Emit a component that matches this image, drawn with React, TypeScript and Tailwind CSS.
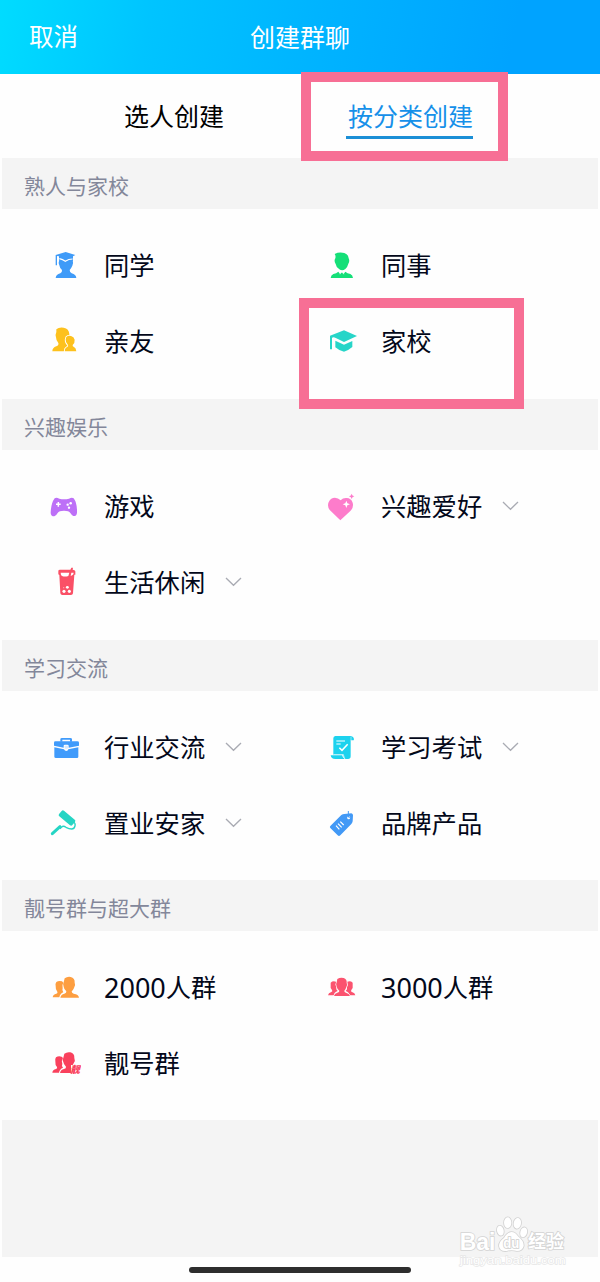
import type { ReactNode } from "react";

function Icon({ box, color, children }: { box: string; color: string; children: ReactNode }) {
  return (
    <svg width="32" height="32" viewBox={box} fill={color} className="shrink-0">
      {children}
    </svg>
  );
}

function Chevron() {
  return (
    <svg width="17" height="10" viewBox="0 0 17 10" fill="none" stroke="#a9abb3" strokeWidth="1.3" className="-mt-[2px] ml-[20px]">
      <path d="M1 1 L8.5 8.3 L16 1" />
    </svg>
  );
}

const classmate = (
  <Icon box="27 30 96 96" color="#3f9bf8">
    <path d="M47 45 L77 36 L106 45 L99 49 L99 62 L77 69 L57 61 L57 49 L51 48 L51 76 L47 76Z" />
    <path d="M58 59 Q68 60 76 67 Q86 59 98 60 Q101 70 97 77 Q93 86 89 90 Q89 97 95 100 Q108 103 109 114 H47 Q48 103 61 100 Q67 97 66 90 Q59 84 58 76 Q54 69 58 59Z" />
    <path d="M58 56 Q68 58 76 64 Q86 57 98 57" fill="none" stroke="#fff" strokeWidth="3.5" />
  </Icon>
);

const friends = (
  <Icon box="27 258 96 96" color="#fdc11d">
    <path d="M49 268 Q58 260 71 263 Q87 266 88 282 L84 334 H37 Q37 323 49 319 Q57 316 55 309 Q48 302 48 292 Q45 285 49 276Z" />
    <path d="M79 291 Q84 286 93 288 Q102 290 104 299 Q105 309 98 315 Q97 320 102 321 Q108 324 109 334 H74 Q74 325 80 322 Q87 319 84 315 Q76 308 77 298Z" stroke="#fff" strokeWidth="5" paintOrder="stroke" />
  </Icon>
);

const colleague = (
  <Icon box="108 30 96 96" color="#15df78">
    <path d="M134 42 Q147 35 163 39 Q175 43 176 55 Q180 63 175 71 Q173 80 166 87 Q157 94 148 88 Q138 81 137 72 Q131 63 136 55 Q138 48 134 42Z" />
    <path d="M145 95 Q139 100 130 102 Q123 105 122 114 H189 Q188 105 181 102 Q172 100 166 95 L161 102 L158 98 L153 98 L150 102Z" />
    <path d="M153 98 L150 103 M158 98 L161 103" stroke="#fff" strokeWidth="1.5" />
  </Icon>
);

const school = (
  <Icon box="108 258 96 96" color="#27d5c8">
    <path d="M120 287 L162 271 L201 288 L162 306 L139 295 Q129 289 126 294 V328 H120Z" />
    <path d="M136 302 L162 314 L187 303 V321 Q177 330 162 335 Q147 332 136 322Z" />
  </Icon>
);

const game = (
  <Icon box="27 33 96 96" color="#bd70f7">
    <path d="M44 55 Q49 51 58 56 Q72 60 87 56 Q96 51 101 55 Q112 70 111 98 Q110 109 100 108 Q96 107 91 99 Q87 92 72 92 Q57 92 53 99 Q48 108 43 109 Q32 109 32 98 Q33 70 44 55Z" />
    <path d="M55 66 V80 M48 73 H62" stroke="#fff" strokeWidth="4.5" />
    <circle cx="92" cy="70" r="3.8" fill="#fff" />
    <circle cx="83" cy="74" r="3.5" fill="#fff" />
    <circle cx="87" cy="83" r="3.5" fill="#fff" />
  </Icon>
);

const drink = (
  <Icon box="27 261 96 96" color="#fa5066">
    <path d="M55 273 Q55 269 60 269 H91 L94 263 H99 L98 269 Q105 270 106 274 V284 H103 L99 340 Q98 345 93 345 H67 Q62 345 61 340 L58 285 L55 283Z" />
    <path d="M62 278 H88 L85 288 Q75 291 66 288 Q62 286 62 278Z M94 278 H101 L100 283 Q97 287 92 288Z" fill="#fff" />
    <circle cx="82" cy="322" r="4.3" fill="#fff" />
    <circle cx="72" cy="334" r="4.7" fill="#fff" />
    <circle cx="88" cy="334" r="4.7" fill="#fff" />
    <circle cx="71" cy="323" r="2" fill="#fff" opacity=".5" />
  </Icon>
);

const hobby = (
  <Icon box="48 33 96 96" color="#fd7ccb">
    <path d="M92 61 Q82 51 69 54 Q55 59 54 76 Q54 86 63 94 L91 121 L121 93 Q132 82 128 68 Q123 54 110 54 Q99 53 92 61Z" />
    <path d="M109 62 L112 70 L120 73 L112 76 L109 84 L106 76 L98 73 L106 70Z" fill="#fff" />
    <path d="M125 41 L127.5 46.5 L133 49 L127.5 51.5 L125 57 L122.5 51.5 L117 49 L122.5 46.5Z" />
  </Icon>
);

const business = (
  <Icon box="27 36 96 96" color="#409bfb">
    <path d="M61 65 V58 Q61 54 66 54 H91 Q96 54 96 58 V65 H90 V59 H67 V65Z" />
    <path d="M46 64 H112 Q117 64 117 68 V77 L86 83 V77 Q86 74 82 74 H75 Q71 74 71 77 V83 L42 77 V68 Q42 64 46 64Z" />
    <path d="M43 82 L72 88 Q74 93 79 93 Q84 93 85 88 L115 82 V110 Q115 114 111 114 H48 Q43 114 43 110Z" />
    <rect x="74" y="77" width="10" height="9" rx="2" fill="#d5e9ff" />
  </Icon>
);

const roller = (
  <Icon box="27 264 96 96" color="#25d5c4">
    <rect x="-26" y="-11" width="52" height="22" rx="5" transform="translate(81 294) rotate(40)" />
    <path d="M101 306 Q107 310 105 318 Q103 327 95 327 Q87 327 78 322 Q70 316 65 321 L60 326" fill="none" stroke="#25d5c4" strokeWidth="4" />
    <path d="M37 341 L60 320" stroke="#25d5c4" strokeWidth="9" strokeLinecap="round" />
  </Icon>
);

const exam = (
  <Icon box="48 36 96 96" color="#1dd2ee">
    <path d="M76 48 H123 Q131 49 132 57 L131 61 H122 V109 Q122 117 114 117 H104 Q101 109 98 105 H70 V55 Q70 49 76 48Z" />
    <path d="M62 106 H96 Q98 113 104 117 H76 Q63 117 62 106Z" />
    <path d="M70 103.5 H100 Q102 112 105 118" stroke="#fff" strokeWidth="2" fill="none" />
    <path d="M79 63 H105 M79 72 H92" stroke="#fff" strokeWidth="3.5" />
    <path d="M88 83 L96 91 L113 73" stroke="#fff" strokeWidth="4.5" fill="none" />
    <path d="M123 50 V62" stroke="#fff" strokeWidth="1.5" />
  </Icon>
);

const tag = (
  <Icon box="48 264 96 96" color="#4299f6">
    <path d="M61 318 L94 285 Q98 282 103 282 L124 280 Q129 281 129 286 L128 304 Q127 309 124 312 L91 346 Q87 350 83 346 L61 324 Q58 321 61 318Z" />
    <circle cx="116" cy="293" r="4.5" fill="#fff" />
    <path d="M115 273 V288 Q115 293 119 293" stroke="#4299f6" strokeWidth="3" fill="none" />
    <path d="M78 317 L88 328 M84 311 L95 322 M91 305 L101 315" stroke="#fff" strokeWidth="3.5" />
  </Icon>
);

const backHead = "M49 66 Q56 61 66 64 L70 68 Q65 75 68 85 Q65 92 70 97 Q60 101 58 112 H38 Q39 103 49 101 Q54 99 52 95 Q46 89 47 78 Q45 72 49 66Z";
const frontHead = "M74 55 Q82 49 92 51 Q105 54 104 68 Q108 76 102 84 Q99 91 95 94 Q95 99 101 101 Q116 103 117 113 H61 Q63 103 73 101 Q80 99 79 94 Q72 88 71 80 Q67 73 71 67Z";

const group2000 = (
  <Icon box="27 36 96 96" color="#fd9e40">
    <path d={backHead} />
    <path d={frontHead} />
  </Icon>
);

const group3000 = (
  <Icon box="48 36 96 96" color="#fb536f">
    <path d="M62 68 Q68 62 78 65 Q76 75 79 82 Q77 88 83 93 Q72 97 71 106 H54 Q55 98 64 96 Q69 94 66 90 Q60 84 62 77Z" />
    <path d="M128 68 Q122 62 112 65 Q114 75 111 82 Q113 88 107 93 Q118 97 119 106 H136 Q135 98 126 96 Q121 94 124 90 Q130 84 128 77Z" />
    <path d="M82 57 Q91 51 101 54 Q111 57 110 68 Q114 76 108 84 Q106 89 103 92 Q102 97 108 98 Q118 100 120 108 H72 Q73 100 82 98 Q89 96 88 92 Q82 88 80 80 Q76 73 80 67Z" stroke="#fff" strokeWidth="3" paintOrder="stroke" />
  </Icon>
);

const vanity = (
  <Icon box="27 264 96 96" color="#f9415d">
    <g transform="translate(-1 226)">
      <path d={backHead} />
      <path d={frontHead} />
    </g>
    <rect x="93" y="315" width="31" height="24" fill="#fff" />
    <text x="91" y="338" fontSize="29" fontWeight="900" fontStyle="italic" fontFamily="'Noto Sans CJK SC', sans-serif">靓</text>
  </Icon>
);

type Item = { icon: ReactNode; label: string; digits?: string; more?: boolean };

const sections: { title: string; body: string; items: Item[] }[] = [
  {
    title: "熟人与家校",
    body: "h-[190px]",
    items: [
      { icon: classmate, label: "同学" },
      { icon: colleague, label: "同事" },
      { icon: friends, label: "亲友" },
      { icon: school, label: "家校" },
    ],
  },
  {
    title: "兴趣娱乐",
    body: "h-[190px]",
    items: [
      { icon: game, label: "游戏" },
      { icon: hobby, label: "兴趣爱好", more: true },
      { icon: drink, label: "生活休闲", more: true },
    ],
  },
  {
    title: "学习交流",
    body: "h-[189px]",
    items: [
      { icon: business, label: "行业交流", more: true },
      { icon: exam, label: "学习考试", more: true },
      { icon: roller, label: "置业安家", more: true },
      { icon: tag, label: "品牌产品" },
    ],
  },
  {
    title: "靓号群与超大群",
    body: "h-[189px]",
    items: [
      { icon: group2000, digits: "2000", label: "人群" },
      { icon: group3000, digits: "3000", label: "人群" },
      { icon: vanity, label: "靓号群" },
    ],
  },
];

function Watermark() {
  return (
    <svg
      className="absolute left-[440px] top-[1200px]"
      width="160"
      height="82"
      viewBox="0 0 480 246"
      fill="#fff"
      stroke="#d3d3d3"
      strokeWidth="5"
      paintOrder="stroke"
      fontFamily="'Liberation Sans', 'Noto Sans CJK SC', sans-serif"
    >
      <text x="59" y="151" fontSize="72" fontWeight="700" textLength="107" lengthAdjust="spacingAndGlyphs">Bai</text>
      <ellipse cx="181" cy="92" rx="10" ry="15" transform="rotate(-12 181 92)" />
      <ellipse cx="203" cy="68" rx="11" ry="16" />
      <ellipse cx="232" cy="70" rx="11" ry="16" transform="rotate(10 232 70)" />
      <ellipse cx="251" cy="97" rx="10" ry="15" transform="rotate(15 251 97)" />
      <path d="M214 96 Q226 96 234 109 Q252 123 251 138 Q247 153 231 153 Q214 148 200 153 Q179 155 177 138 Q177 125 192 114 Q202 97 214 96Z" />
      <text x="190" y="145" fontSize="42" fontWeight="700" textLength="48" lengthAdjust="spacingAndGlyphs" stroke="#cfcfcf">du</text>
      <text x="264" y="145" fontSize="54" fontWeight="700" fontFamily="'Noto Sans CJK SC', sans-serif">经验</text>
      <text x="60" y="192" fontSize="35" strokeWidth="4" stroke="#e6e6e6" textLength="317" lengthAdjust="spacingAndGlyphs">jingyan.baidu.com</text>
    </svg>
  );
}

export default function App() {
  return (
    <div className="relative flex h-[1282px] w-[600px] flex-col overflow-hidden bg-[#fefefe] font-['Noto_Sans_CJK_SC',sans-serif] text-[25px] leading-none text-[#03081a]">
      <header className="grid h-[74px] grid-cols-[1fr_auto_1fr] items-center bg-[linear-gradient(100deg,#00dcff_0%,#00c4ff_25%,#00b4ff_52%,#00a3ff_85%)] px-[29px] pb-[2px] text-white">
        <span className="text-[24.5px]">取消</span>
        <h1>创建群聊</h1>
      </header>

      <nav className="flex h-[84px] items-start pl-[124px] pt-[29px] text-black">
        <span>选人创建</span>
        <span className="ml-[122px] flex h-[36px] border-b-[3px] border-[#1b8fd6] pl-[2px] text-[#1690e9]">按分类创建</span>
      </nav>

      {sections.map((section) => (
        <section key={section.title}>
          <h2 className="mx-[2px] flex h-[51px] items-center bg-[#f4f4f4] pl-[22px] pt-[4px] text-[21px] text-[#83879a]">
            {section.title}
          </h2>
          <div className={`grid auto-rows-[76px] grid-cols-[277px_1fr] pl-[49px] pt-[19px] ${section.body}`}>
            {section.items.map((item) => (
              <div key={item.label + (item.digits ?? "")} className="flex items-center">
                {item.icon}
                <span className="ml-[23px] flex items-center whitespace-nowrap pb-[2px] text-[25.3px]">
                  {item.digits && <span className="font-['Noto_Sans'] text-[27px]">{item.digits}</span>}
                  {item.label}
                </span>
                {item.more && <Chevron />}
              </div>
            ))}
          </div>
        </section>
      ))}

      <div className="mx-[2px] h-[137px] bg-[#f4f4f4]" />
      <div className="flex justify-center pt-[10px]">
        <div className="h-[6px] w-[222px] rounded-full bg-[#2d2d2d]" />
      </div>

      <div className="absolute left-[301px] top-[72px] h-[89px] w-[207px] border-[10px] border-[#f76f95]" />
      <div className="absolute left-[299px] top-[298px] h-[111px] w-[225px] border-[10px] border-[#f76f95]" />
      <Watermark />
    </div>
  );
}
